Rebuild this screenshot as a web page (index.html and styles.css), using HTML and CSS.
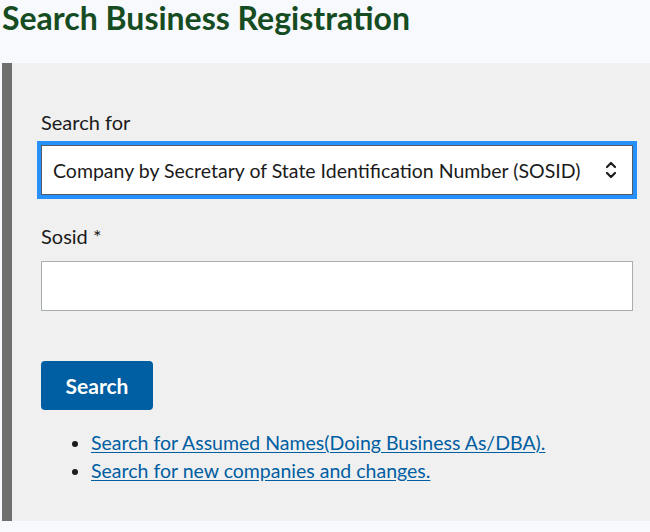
FILE: index.html
```html
<!DOCTYPE html>
<html lang="en">
<head>
<meta charset="utf-8">
<title>Search Business Registration</title>
<link rel="stylesheet" href="styles.css">
</head>
<body>
<h1 class="page-title">Search Business Registration</h1>
<form class="search-panel">
  <label class="field-label" for="searchFor">Search for</label>
  <div class="select-wrap">
    <select id="searchFor" class="select">
      <option>Company by Secretary of State Identification Number (SOSID)</option>
    </select>
    <svg class="select-icon" width="12" height="18" viewBox="0 0 12 18" aria-hidden="true">
      <path d="M2 6 L6 2 L10 6" fill="none" stroke="#1b1b1b" stroke-width="2.2" stroke-linecap="round" stroke-linejoin="round"/>
      <path d="M2 12 L6 16 L10 12" fill="none" stroke="#1b1b1b" stroke-width="2.2" stroke-linecap="round" stroke-linejoin="round"/>
    </svg>
  </div>
  <label class="field-label field-label--second" for="sosid">Sosid *</label>
  <input id="sosid" class="text-input" type="text">
  <button type="button" class="btn">Search</button>
  <ul class="links">
    <li><a href="#">Search for Assumed Names(Doing Business As/DBA).</a></li>
    <li><a href="#">Search for new companies and changes.</a></li>
  </ul>
</form>
</body>
</html>
```
FILE: styles.css
```css
html, body {
  margin: 0;
  padding: 0;
}
body {
  background: #f8f9fd;
  font-family: "Lato", "Liberation Sans", sans-serif;
  color: #1b1b1b;
  height: 532px;
  overflow: hidden;
}
.page-title {
  margin: 0 0 0 2px;
  font-size: 32px;
  line-height: 36px;
  font-weight: 700;
  color: #154c21;
  padding-top: 0;
  height: 63px;
  box-sizing: border-box;
}
.search-panel {
  margin-left: 2px;
  border-left: 10px solid #6f6f6f;
  background: #f0f0f0;
  padding: 46px 17px 0 29px;
  height: 458px;
  box-sizing: border-box;
  display: flex;
  flex-direction: column;
  align-items: flex-start;
}
.field-label {
  font-size: 20px;
  line-height: 26px;
  color: #1b1b1b;
}
.field-label--second {
  margin-top: 28px;
}
.select-wrap {
  position: relative;
  align-self: stretch;
  margin-top: 10px;
}
.select {
  appearance: none;
  -webkit-appearance: none;
  display: block;
  width: 100%;
  height: 50px;
  box-sizing: border-box;
  border: 1px solid #565c65;
  outline: 4px solid #2491ff;
  border-radius: 0;
  background: #fff;
  font-family: inherit;
  font-size: 19.5px;
  color: #1b1b1b;
  padding: 0 40px 0 11px;
}
.select-icon {
  position: absolute;
  right: 16px;
  top: 16px;
}
.text-input {
  align-self: stretch;
  margin-top: 12px;
  height: 50px;
  box-sizing: border-box;
  border: 1px solid #a9aeb1;
  background: #fff;
  font-family: inherit;
  font-size: 19.5px;
  padding: 0 11px;
}
.btn {
  margin-top: 50px;
  width: 112px;
  height: 49px;
  border: 0;
  border-radius: 4px;
  background: #005ea2;
  color: #fff;
  font-family: inherit;
  font-weight: 700;
  font-size: 21px;
}
.links {
  margin: 19px 0 0 0;
  padding-left: 50px;
  font-size: 19.5px;
  line-height: 28px;
}
.links li::marker {
  color: #1b1b1b;
}
.links a {
  color: #005ea2;
  text-decoration: underline;
  text-underline-offset: 2px;
}
```
